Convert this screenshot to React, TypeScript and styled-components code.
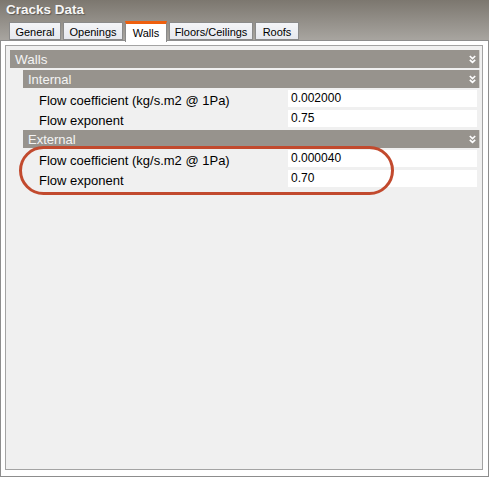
import React from 'react';
import styled, { createGlobalStyle } from 'styled-components';

const GlobalStyle = createGlobalStyle`
	html, body {
		margin: 0;
		padding: 0;
		background: #ffffff;
	}
	body {
		font-family: "Liberation Sans", Arial, sans-serif;
	}
`;

interface Entry {
	label: string;
	value: string;
}

interface Section {
	name: string;
	entries: Entry[];
}

const sections: Section[] = [
	{
		name: 'Internal',
		entries: [
			{ label: 'Flow coefficient (kg/s.m2 @ 1Pa)', value: '0.002000' },
			{ label: 'Flow exponent', value: '0.75' },
		],
	},
	{
		name: 'External',
		entries: [
			{ label: 'Flow coefficient (kg/s.m2 @ 1Pa)', value: '0.000040' },
			{ label: 'Flow exponent', value: '0.70' },
		],
	},
];

const tabs = [
	{ name: 'General', width: 52 },
	{ name: 'Openings', width: 60 },
	{ name: 'Walls', width: 42 },
	{ name: 'Floors/Ceilings', width: 84 },
	{ name: 'Roofs', width: 44 },
];

const Window = styled.div`
	position: relative;
	width: 489px;
	height: 477px;
	display: flex;
	flex-direction: column;
	background: linear-gradient(to bottom, #7c776f 0px, #a9a6a1 41px, #ffffff 41px);
	overflow: hidden;
`;

const Title = styled.div`
	height: 22px;
	padding-left: 6px;
	font-size: 13.5px;
	font-weight: bold;
	line-height: 20px;
	color: #f6f6f6;
	text-shadow: 1px 1px 1px rgba(0, 0, 0, 0.35);
`;

const TabStrip = styled.div`
	height: 18px;
	display: flex;
	align-items: flex-end;
	gap: 2px;
	padding-left: 9px;
	position: relative;
	z-index: 1;
`;

const Tab = styled.div<{ $active?: boolean; $width: number }>`
	box-sizing: border-box;
	width: ${({ $width }) => $width}px;
	height: ${({ $active }) => ($active ? '21px' : '18px')};
	margin-bottom: ${({ $active }) => ($active ? '-2px' : '0')};
	display: flex;
	align-items: center;
	justify-content: center;
	font-size: 11px;
	color: #000;
	border: 1px solid #8a8a8a;
	border-bottom: ${({ $active }) => ($active ? 'none' : '1px solid #8a8a8a')};
	border-top: ${({ $active }) => ($active ? '3px solid #ee5f0e' : '1px solid #8a8a8a')};
	background: ${({ $active }) =>
		$active ? '#ffffff' : 'linear-gradient(to bottom, #f4f5f8, #e6e8ee)'};
	padding-top: ${({ $active }) => ($active ? '0' : '1px')};
`;

const Page = styled.div`
	flex: 1;
	display: flex;
	border: 1px solid #8d8d8d;
	background: #ffffff;
	padding: 4px 5px 6px 4px;
`;

const Panel = styled.div`
	flex: 1;
	border: 1px solid #a3a3a3;
	background: #f0f0f0;
	padding: 4px 2px 0 4px;
	display: flex;
	flex-direction: column;
`;

const GroupHeader = styled.div<{ $indent?: number }>`
	box-sizing: border-box;
	height: 18px;
	margin-left: ${({ $indent }) => $indent || 0}px;
	margin-bottom: 2px;
	display: flex;
	align-items: center;
	justify-content: space-between;
	padding: 0 3px 0 5px;
	background: #97938d;
	border-right: 1px solid #d4d2ce;
	color: #f4f4f4;
	font-size: ${({ $indent }) => ($indent ? '13px' : '13.5px')};
`;

const Chevron = styled.svg`
	width: 7px;
	height: 9px;
	flex-shrink: 0;
`;

const Row = styled.div`
	height: 20px;
	display: flex;
	margin-left: 13px;
	margin-right: 3px;
`;

const Label = styled.div`
	flex: 1;
	padding-left: 16px;
	font-size: 13px;
	line-height: 21px;
	color: #000;
`;

const Value = styled.div`
	box-sizing: border-box;
	width: 189px;
	height: 17px;
	padding-left: 3px;
	background: #ffffff;
	font-size: 12px;
	line-height: 17px;
	color: #000;
`;

const Annotation = styled.svg`
	position: absolute;
	left: 19px;
	top: 146px;
	width: 375px;
	height: 49px;
	pointer-events: none;
`;

function DoubleChevron() {
	return (
		<Chevron viewBox="0 0 7 9">
			<path
				d="M0.8 1 L3.5 3.6 L6.2 1 M0.8 4.8 L3.5 7.4 L6.2 4.8"
				fill="none"
				stroke="#ffffff"
				strokeWidth="1.6"
			/>
		</Chevron>
	);
}

function App() {
	return (
		<>
			<GlobalStyle />
			<Window>
				<Title>Cracks Data</Title>
				<TabStrip>
					{tabs.map((tab) => (
						<Tab key={tab.name} $width={tab.width} $active={tab.name === 'Walls'}>
							{tab.name}
						</Tab>
					))}
				</TabStrip>
				<Page>
					<Panel>
						<GroupHeader>
							<span>Walls</span>
							<DoubleChevron />
						</GroupHeader>
						{sections.map((section) => (
							<React.Fragment key={section.name}>
								<GroupHeader $indent={13}>
									<span>{section.name}</span>
									<DoubleChevron />
								</GroupHeader>
								{section.entries.map((entry) => (
									<Row key={entry.label}>
										<Label>{entry.label}</Label>
										<Value>{entry.value}</Value>
									</Row>
								))}
							</React.Fragment>
						))}
					</Panel>
				</Page>
				<Annotation viewBox="0 0 375 49">
					<rect
						x="1.5"
						y="1.5"
						width="372"
						height="46"
						rx="23"
						fill="none"
						stroke="#c24a2e"
						strokeWidth="3"
					/>
				</Annotation>
			</Window>
		</>
	);
}

export default App;
